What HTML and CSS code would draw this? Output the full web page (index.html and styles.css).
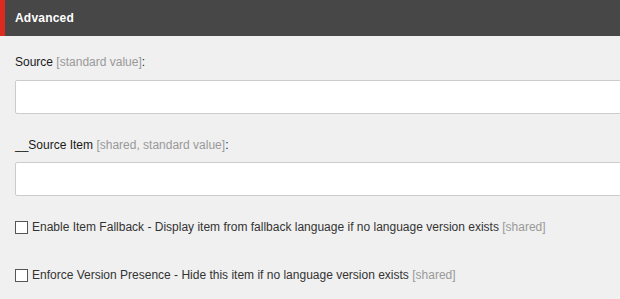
FILE: index.html
```html
<!DOCTYPE html>
<html>
<head>
<meta charset="utf-8">
<link rel="stylesheet" href="styles.css">
</head>
<body>
<div class="header">Advanced</div>
<div class="content">
  <div class="label first">Source <span class="meta">[standard value]</span>:</div>
  <div class="input"></div>
  <div class="label">__Source Item <span class="meta">[shared, standard value]</span>:</div>
  <div class="input"></div>
  <div class="check first-check"><span class="box"></span><span>Enable Item Fallback - Display item from fallback language if no language version exists <span class="meta">[shared]</span></span></div>
  <div class="check second-check"><span class="box"></span><span>Enforce Version Presence - Hide this item if no language version exists <span class="meta">[shared]</span></span></div>
</div>
</body>
</html>
```
FILE: styles.css
```css
html, body {
  margin: 0;
  padding: 0;
  background: #f0f0f0;
  overflow: hidden;
  font-family: "Liberation Sans", Arial, sans-serif;
  font-size: 12px;
}
.header {
  height: 36px;
  line-height: 36px;
  background: #474747;
  border-left: 5px solid #dc2a1f;
  padding-left: 10px;
  color: #fff;
  font-weight: bold;
  font-size: 12px;
  letter-spacing: 0.2px;
}
.content {
  padding-left: 15px;
}
.label {
  line-height: 16px;
  color: #1a1a1a;
  margin-top: 23px;
  margin-bottom: 9px;
}
.label.first {
  margin-top: 18px;
  margin-bottom: 10px;
}
.meta {
  color: #999;
}
.input {
  box-sizing: border-box;
  height: 34px;
  background: #fff;
  border: 1px solid #ccc;
  border-radius: 2px;
  margin-right: -10px;
}
.check {
  display: flex;
  align-items: center;
  gap: 4px;
  line-height: 16px;
  color: #333;
}
.first-check {
  margin-top: 23px;
}
.second-check {
  margin-top: 32px;
}
.box {
  box-sizing: border-box;
  width: 13px;
  height: 13px;
  background: #fff;
  border: 1px solid #555;
  flex: none;
}
```
